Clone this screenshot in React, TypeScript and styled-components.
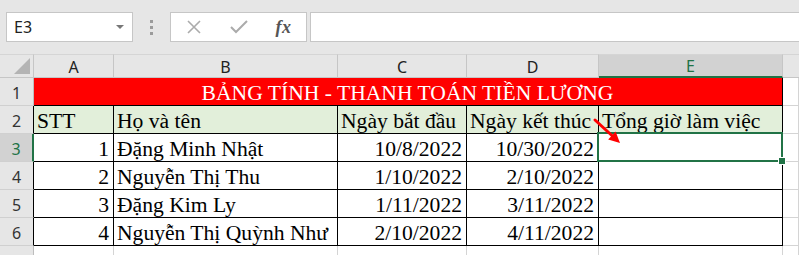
import React from "react";
import styled, { createGlobalStyle } from "styled-components";

const GlobalStyle = createGlobalStyle`
  html, body {
    margin: 0;
    padding: 0;
    background: #ffffff;
  }
  * {
    box-sizing: border-box;
  }
`;

const GREEN = "#217346";
const UI_FONT = `"Noto Sans", "Open Sans", sans-serif`;
const CELL_FONT = `"Liberation Serif", "Times New Roman", serif`;

const rows = [
  { stt: 1, name: "Đặng Minh Nhật", start: "10/8/2022", end: "10/30/2022" },
  { stt: 2, name: "Nguyễn Thị Thu", start: "1/10/2022", end: "2/10/2022" },
  { stt: 3, name: "Đặng Kim Ly", start: "1/11/2022", end: "3/11/2022" },
  { stt: 4, name: "Nguyễn Thị Quỳnh Như", start: "2/10/2022", end: "4/11/2022" },
];

const columns = ["A", "B", "C", "D", "E"];

export default function App() {
  return (
    <>
      <GlobalStyle />
      <Screen>
        <FormulaBar>
          <NameBox>
            <span>E3</span>
            <Caret />
          </NameBox>
          <Grip>
            <i />
            <i />
            <i />
          </Grip>
          <FxBox>
            <FxButton>
              <svg width="14" height="14" viewBox="0 0 14 14">
                <path d="M1 1 L13 13 M13 1 L1 13" stroke="#ababab" strokeWidth="1.6" fill="none" />
              </svg>
            </FxButton>
            <FxButton>
              <svg width="18" height="14" viewBox="0 0 18 14">
                <path d="M1 7 L6 12 L17 1" stroke="#ababab" strokeWidth="2" fill="none" />
              </svg>
            </FxButton>
            <FxButton>
              <FxLabel>fx</FxLabel>
            </FxButton>
          </FxBox>
          <FormulaInput />
        </FormulaBar>

        <Sheet>
          <Corner>
            <CornerMark />
          </Corner>
          {columns.map((c) => (
            <ColHead key={c} $active={c === "E"}>
              {c}
            </ColHead>
          ))}
          <ColHead $blank />

          <RowHead $edge="#bdbdbd">1</RowHead>
          <Title>BẢNG TÍNH - THANH TOÁN TIỀN LƯƠNG</Title>
          <Cell $line="#d4d4d4" />

          <RowHead $edge="#000">2</RowHead>
          <Cell $bg="#e2efda">STT</Cell>
          <Cell $bg="#e2efda">Họ và tên</Cell>
          <Cell $bg="#e2efda">Ngày bắt đầu</Cell>
          <Cell $bg="#e2efda">Ngày kết thúc</Cell>
          <Cell $bg="#e2efda">Tổng giờ làm việc</Cell>
          <Cell $line="#d4d4d4" />

          {rows.map((r, i) => (
            <React.Fragment key={r.stt}>
              <RowHead $active={i === 0} $edge={i === 0 ? GREEN : "#000"}>
                {i + 3}
              </RowHead>
              <Cell $align="right">{r.stt}</Cell>
              <Cell>{r.name}</Cell>
              <Cell $align="right">{r.start}</Cell>
              <Cell $align="right">{r.end}</Cell>
              <Cell>
                {i === 0 && (
                  <Selection>
                    <FillHandle />
                  </Selection>
                )}
              </Cell>
              <Cell $line="#d4d4d4" />
            </React.Fragment>
          ))}

          <RowHead $edge="#bdbdbd">7</RowHead>
          {columns.map((c) => (
            <Cell key={c} $line="#d4d4d4" />
          ))}
          <Cell $line="#d4d4d4" />
        </Sheet>

        <Arrow width="36" height="34" viewBox="0 0 36 34">
          <line x1="5" y1="6" x2="23" y2="22.5" stroke="#ff0000" strokeWidth="3" strokeLinecap="round" />
          <polygon points="30,29 18.2,25.4 25.6,17.6" fill="#ff0000" />
        </Arrow>
      </Screen>
    </>
  );
}

const Screen = styled.div`
  position: relative;
  width: 799px;
  height: 255px;
  overflow: hidden;
  background: #ffffff;
`;

const FormulaBar = styled.div`
  display: flex;
  align-items: stretch;
  height: 54px;
  padding: 12px 0 12px 6px;
  background: #e6e6e6;
`;

const NameBox = styled.div`
  display: flex;
  align-items: center;
  justify-content: space-between;
  width: 127px;
  padding: 0 7px;
  background: #ffffff;
  border: 1px solid #c6c6c6;
  font-family: ${UI_FONT};
  font-size: 16px;
  color: #222;
`;

const Caret = styled.span`
  width: 0;
  height: 0;
  margin-right: 1px;
  border-left: 4px solid transparent;
  border-right: 4px solid transparent;
  border-top: 4px solid #777;
`;

const Grip = styled.div`
  display: flex;
  flex-direction: column;
  align-items: center;
  justify-content: center;
  gap: 3px;
  width: 37px;
  i {
    display: block;
    width: 3px;
    height: 3px;
    background: #9b9b9b;
  }
`;

const FxBox = styled.div`
  display: grid;
  grid-template-columns: repeat(3, 45px);
  width: 137px;
  background: #ffffff;
  border: 1px solid #c6c6c6;
`;

const FxButton = styled.div`
  display: flex;
  align-items: center;
  justify-content: center;
`;

const FxLabel = styled.span`
  font-family: ${CELL_FONT};
  font-style: italic;
  font-weight: bold;
  font-size: 18px;
  color: #555;
  letter-spacing: 0.5px;
`;

const FormulaInput = styled.div`
  flex: 1;
  margin-left: 3px;
  background: #ffffff;
  border: 1px solid #c6c6c6;
  border-right: none;
`;

const Sheet = styled.div`
  display: grid;
  grid-template-columns: 34px 80px 224px 129px 132px 184px 1fr;
  grid-template-rows: 24px repeat(7, 28px);
`;

const Corner = styled.div`
  background: #e6e6e6;
  border-top: 1px solid #d5d5d5;
  border-right: 1px solid #c6c6c6;
  border-bottom: 1px solid #c6c6c6;
  display: flex;
  align-items: flex-end;
  justify-content: flex-end;
  padding: 0 3px 3px 0;
`;

const CornerMark = styled.div`
  width: 16px;
  height: 16px;
  background: #b4b4b4;
  clip-path: polygon(100% 0, 100% 100%, 0 100%);
`;

const ColHead = styled.div<{ $active?: boolean; $blank?: boolean }>`
  display: flex;
  align-items: center;
  justify-content: center;
  padding-top: 1px;
  background: ${(p) => (p.$active ? "#d2d2d2" : "#e6e6e6")};
  border-top: 1px solid #d5d5d5;
  border-right: ${(p) => (p.$blank ? "none" : "1px solid #c6c6c6")};
  border-bottom: ${(p) => (p.$active ? `2px solid ${GREEN}` : "1px solid #c6c6c6")};
  font-family: ${UI_FONT};
  font-size: 16px;
  color: ${(p) => (p.$active ? GREEN : "#222")};
`;

const RowHead = styled.div<{ $active?: boolean; $edge: string }>`
  display: flex;
  align-items: center;
  justify-content: center;
  padding-top: 2px;
  background: ${(p) => (p.$active ? "#d2d2d2" : "#e6e6e6")};
  border-right: ${(p) => (p.$active ? "2px" : "1px")} solid ${(p) => p.$edge};
  border-bottom: 1px solid #d0d0d0;
  font-family: ${UI_FONT};
  font-size: 16px;
  color: ${(p) => (p.$active ? GREEN : "#333")};
`;

const Cell = styled.div<{ $bg?: string; $align?: "left" | "right"; $line?: string }>`
  position: relative;
  display: flex;
  align-items: flex-end;
  justify-content: ${(p) => (p.$align === "right" ? "flex-end" : "flex-start")};
  padding: 0 4px 0 3px;
  background: ${(p) => p.$bg || "#ffffff"};
  border-right: 1px solid ${(p) => p.$line || "#000"};
  border-bottom: 1px solid ${(p) => p.$line || "#000"};
  font-family: ${CELL_FONT};
  font-size: 21.6px;
  line-height: 24px;
  color: #000;
  white-space: nowrap;
`;

const Title = styled(Cell)`
  grid-column: span 5;
  justify-content: center;
  background: #ff0000;
  color: #ffffff;
`;

const Selection = styled.div`
  position: absolute;
  top: -2px;
  left: -2px;
  right: -1px;
  bottom: -1px;
  z-index: 2;
  border: 2px solid ${GREEN};
`;

const FillHandle = styled.div`
  position: absolute;
  right: -4px;
  bottom: -4px;
  width: 6px;
  height: 6px;
  background: ${GREEN};
  outline: 1px solid #ffffff;
`;

const Arrow = styled.svg`
  position: absolute;
  left: 590px;
  top: 114px;
  z-index: 3;
`;
